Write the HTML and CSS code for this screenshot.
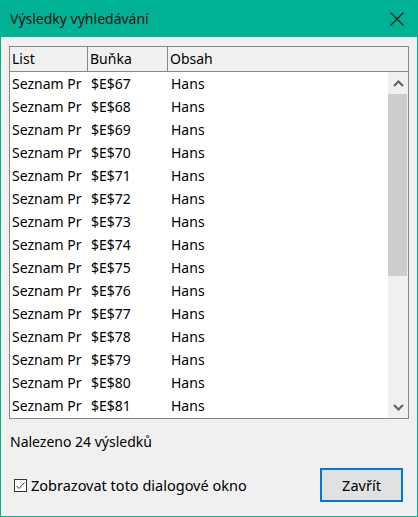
FILE: index.html
```html
<!DOCTYPE html>
<html lang="cs">
<head>
    <meta charset="UTF-8">
    <meta name="viewport" content="width=device-width, initial-scale=1.0">
    <title>Výsledky vyhledávání</title>
    <link rel="stylesheet" href="styles.css">
</head>
<body>
    <div class="window">
        <div class="titlebar">
            <span class="title">Výsledky vyhledávání</span>
            <svg class="close" width="16" height="16" viewBox="0 0 16 16">
                <path d="M1.5 1.5 L14.5 14.5 M14.5 1.5 L1.5 14.5" stroke="#1a1a1a" stroke-width="1.1" fill="none"/>
            </svg>
        </div>

        <div class="content">
            <div class="list">
                <div class="list-head">
                    <div class="hcell">List</div>
                    <div class="hcell">Buňka</div>
                    <div class="hcell last">Obsah</div>
                </div>
                <div class="list-body">
                    <div class="rows" id="rows"></div>
                    <div class="scrollbar">
                        <div class="arrow">
                            <svg width="11" height="7" viewBox="0 0 11 7"><path d="M1 6 L5.5 1.5 L10 6" stroke="#606060" stroke-width="2" fill="none"/></svg>
                        </div>
                        <div class="track">
                            <div class="thumb"></div>
                        </div>
                        <div class="arrow">
                            <svg width="11" height="7" viewBox="0 0 11 7"><path d="M1 1 L5.5 5.5 L10 1" stroke="#606060" stroke-width="2" fill="none"/></svg>
                        </div>
                    </div>
                </div>
            </div>

            <div class="status">Nalezeno 24 výsledků</div>

            <div class="footer">
                <label class="check">
                    <span class="box">
                        <svg width="11" height="11" viewBox="0 0 11 11"><path d="M1.5 6 L4 8.5 L9.5 2.5" stroke="#333" stroke-width="1" fill="none"/></svg>
                    </span>
                    Zobrazovat toto dialogové okno
                </label>
                <button class="btn">Zavřít</button>
            </div>
        </div>
    </div>

    <script>
        // 24 results, first 15 visible
        const rows = document.getElementById('rows');
        for (let i = 67; i < 82; i++) {
            const row = document.createElement('div');
            row.className = 'row';
            row.innerHTML = '<div class="cell">Seznam Pr</div><div class="cell">$E$' + i + '</div><div class="cell">Hans</div>';
            rows.appendChild(row);
        }
    </script>
</body>
</html>
```

FILE: styles.css
```css
body {
    margin: 0;
    font-family: "Segoe UI", "Noto Sans", sans-serif;
    font-size: 14px;
    color: #000;
}
.window {
    width: 418px;
    height: 517px;
    box-sizing: border-box;
    border: 1px solid #00b294;
    border-top: none;
    background: #f0f0f0;
    display: flex;
    flex-direction: column;
}
.titlebar {
    height: 37px;
    background: #00b294;
    display: flex;
    align-items: center;
    justify-content: space-between;
    padding: 0 13px 0 10px;
    margin: 0 -1px;
}
.title {
    font-size: 14px;
    color: #111;
}
.close {
    display: block;
}
.content {
    padding: 9px 8px 0 8px;
    display: flex;
    flex-direction: column;
}
.list {
    width: 400px;
    height: 373px;
    box-sizing: border-box;
    border: 1px solid #828790;
    background: #fff;
    display: flex;
    flex-direction: column;
}
.list-head {
    display: grid;
    grid-template-columns: 78px 80px 1fr;
    height: 25px;
    box-sizing: border-box;
    background: #f0f0f0;
    border-bottom: 1px solid #828790;
}
.hcell {
    border-right: 1px solid #828790;
    padding-left: 2px;
    line-height: 24px;
}
.hcell.last {
    border-right: none;
}
.list-body {
    flex: 1;
    display: flex;
    overflow: hidden;
}
.rows {
    flex: 1;
}
.row {
    display: grid;
    grid-template-columns: 79px 80px 1fr;
    height: 23px;
    line-height: 23px;
}
.cell {
    padding-left: 2px;
    white-space: nowrap;
    overflow: hidden;
}
.scrollbar {
    width: 20px;
    background: #f0f0f0;
    display: flex;
    flex-direction: column;
}
.arrow {
    height: 22px;
    display: flex;
    align-items: center;
    justify-content: center;
}
.track {
    flex: 1;
}
.thumb {
    height: 182px;
    margin-right: 1px;
    background: #cdcdcd;
}
.status {
    padding: 12px 0 0 1px;
    height: 24px;
    line-height: 22px;
}
.footer {
    display: flex;
    align-items: center;
    justify-content: space-between;
    margin-top: 13px;
    padding: 0 6px 0 5px;
}
.check {
    display: flex;
    align-items: center;
    gap: 4px;
    font-size: 14.5px;
}
.box {
    width: 11px;
    height: 11px;
    border: 1px solid #333;
    background: #fff;
    display: flex;
}
.btn {
    width: 83px;
    height: 34px;
    background: #e1e1e1;
    border: 2px solid #0078d7;
    font-family: inherit;
    font-size: 14.5px;
    color: #000;
    padding: 0;
}
```
